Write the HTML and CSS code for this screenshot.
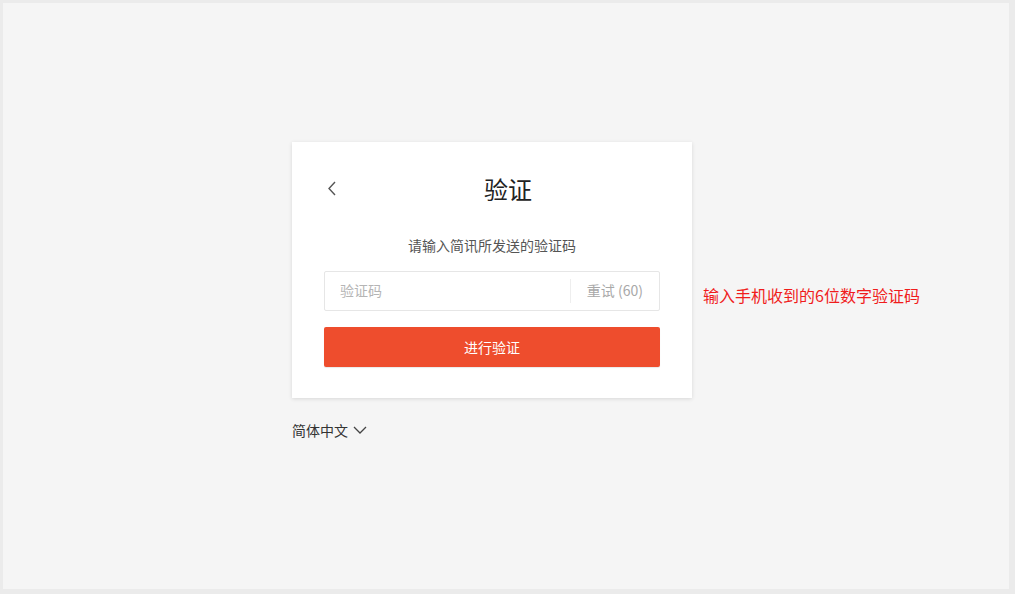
FILE: index.html
```html
<!DOCTYPE html>
<html lang="zh-CN">
<head>
<meta charset="utf-8">
<title>验证</title>
<link rel="stylesheet" href="styles.css">
</head>
<body>
<div class="frame">
  <main class="main">
    <div class="column">
      <section class="card">
        <div class="header">
          <button class="back" aria-label="返回">
            <svg width="10" height="15" viewBox="0 0 10 15"><path d="M8 1 L2 7.5 L8 14" fill="none" stroke="#555" stroke-width="1.4"/></svg>
          </button>
          <h1 class="title">验证</h1>
        </div>
        <p class="subtitle">请输入简讯所发送的验证码</p>
        <div class="field">
          <span class="placeholder">验证码</span>
          <span class="divider"></span>
          <span class="retry">重试 (60)</span>
        </div>
        <button class="submit">进行验证</button>
        <span class="note">输入手机收到的6位数字验证码</span>
      </section>
      <div class="lang">
        <span>简体中文</span>
        <svg width="14" height="10" viewBox="0 0 14 10"><path d="M1 2 L7 8 L13 2" fill="none" stroke="#444" stroke-width="1.3"/></svg>
      </div>
    </div>
  </main>
</div>
</body>
</html>
```

FILE: styles.css
```css
* { box-sizing: border-box; }
html, body { margin: 0; height: 100%; }
body {
  background: #ebebeb;
  font-family: "Noto Sans CJK SC", "Noto Sans", sans-serif;
  padding: 3px 6px 5px 3px;
}
.frame {
  height: 100%;
  background: #f5f5f5;
}
.main {
  height: 100%;
  display: flex;
  justify-content: center;
  padding-right: 28px;
  padding-top: 139px;
}
.column {
  width: 400px;
  display: flex;
  flex-direction: column;
}
.card {
  position: relative;
  background: #fff;
  box-shadow: 0 1px 4px rgba(0,0,0,0.12);
  padding: 29px 32px 31px;
  display: flex;
  flex-direction: column;
}
.header {
  height: 36px;
  display: flex;
  align-items: center;
}
.back {
  width: 32px;
  height: 36px;
  padding: 0 0 1px 3px;
  border: 0;
  background: none;
  display: flex;
  align-items: center;
}
.title {
  flex: 1;
  margin: 0;
  text-align: center;
  font-size: 24px;
  font-weight: 400;
  color: #222;
  line-height: 36px;
}
.subtitle {
  margin: 28px 0 0;
  text-align: center;
  font-size: 14px;
  line-height: 20px;
  color: #555;
}
.field {
  margin-top: 16px;
  height: 40px;
  border: 1px solid #e6e6e6;
  border-radius: 2px;
  display: flex;
  align-items: center;
  font-size: 14px;
  padding-bottom: 2px;
}
.placeholder {
  flex: 1;
  padding-left: 15px;
  color: #b5b5b5;
}
.divider {
  width: 1px;
  height: 24px;
  margin-top: 2px;
  background: #eeeeee;
}
.retry {
  color: #a8a8a8;
  padding: 0 16px 0 16px;
}
.submit {
  margin-top: 16px;
  height: 40px;
  border: 0;
  border-radius: 2px;
  background: #ee4d2d;
  color: #fff;
  font-family: inherit;
  font-size: 14px;
  padding-bottom: 2px;
  box-shadow: 0 1px 1px rgba(0,0,0,0.09);
}
.note {
  position: absolute;
  left: calc(100% + 11px);
  top: 142px;
  white-space: nowrap;
  color: #f01c1c;
  font-size: 16px;
  line-height: 22px;
}
.lang {
  margin-top: 22px;
  display: flex;
  align-items: center;
  gap: 5px;
  font-size: 14px;
  line-height: 20px;
  color: #333;
}
```
